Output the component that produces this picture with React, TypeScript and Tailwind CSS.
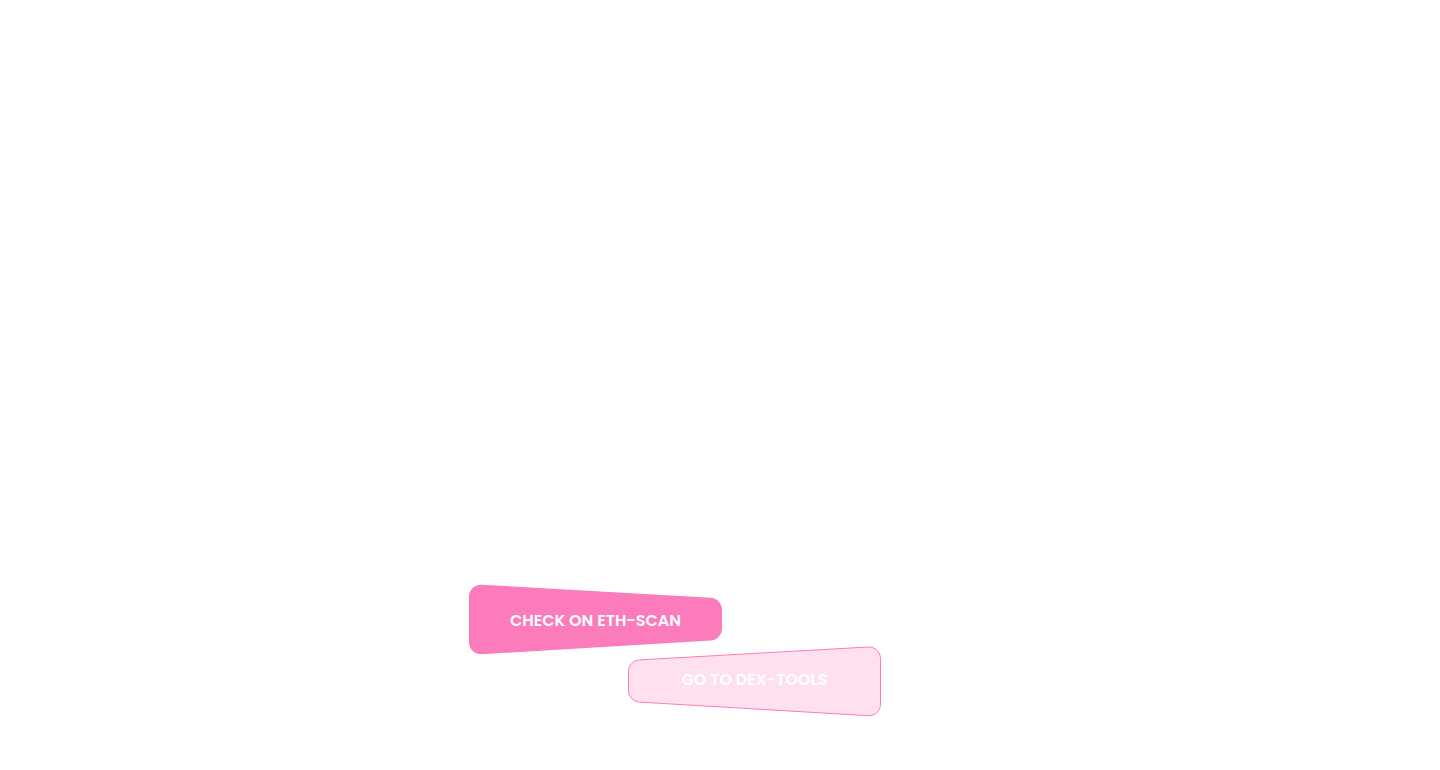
export default function App() {
  return (
    <main className="flex min-h-screen flex-col items-center justify-end bg-white pr-[90px] pb-[53px] font-['Poppins','Lato',sans-serif] text-base leading-6 font-semibold text-white">
      <nav aria-label="Token links" className="flex w-full max-w-[412px] flex-col">
        <a href="#eth-scan" className="relative grid h-[70px] w-[253px] place-items-center self-start pt-0.5">
          <svg aria-hidden="true" className="absolute inset-0 size-full overflow-visible" viewBox="0 0 253 70">
            <path
              d="M0 11.7C0 4.8 5.8-.7 12.7-.3L241.7 12.7C248 13.1 253 18.3 253 24.7V43.6C253 50 248 55.3 241.7 55.6L12.7 69.3C5.8 69.7 0 64.2 0 57.3Z"
              fill="#FB7BBB"
            />
          </svg>
          <span className="relative">CHECK ON ETH-SCAN</span>
        </a>
        <a href="#dex-tools" className="relative -mt-2 grid h-[70px] w-[253px] place-items-center self-end pb-1">
          <svg aria-hidden="true" className="absolute inset-0 size-full overflow-visible" viewBox="0 0 253 70">
            <path
              d="M252.5 11.9C252.5 5 246.9-.3 240.3 0L11.4 12.9C5.3 13.2.5 18.3.5 24.4V43.6C.5 49.7 5.3 54.8 11.4 55.1L240.3 68.7C246.9 69.1 252.5 63.8 252.5 57.2Z"
              fill="#FEE0EE"
              stroke="#FB7BBB"
            />
          </svg>
          <span className="relative">GO TO DEX-TOOLS</span>
        </a>
      </nav>
    </main>
  );
}
